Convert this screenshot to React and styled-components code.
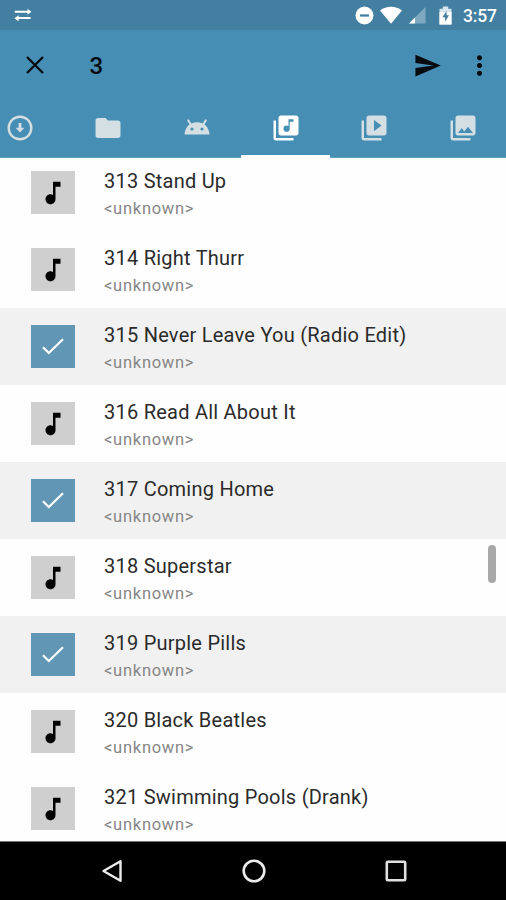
import React from 'react';
import styled, { createGlobalStyle } from 'styled-components';
import {
  MdFolder,
  MdLibraryMusic,
  MdVideoLibrary,
  MdPhotoLibrary,
  MdMusicNote,
  MdSend,
  MdMoreVert,
} from 'react-icons/md';

const GlobalStyle = createGlobalStyle`
  * {
    box-sizing: border-box;
  }

  body {
    margin: 0;
    font-family: Roboto, sans-serif;
    background: #fff;
  }

  svg {
    display: block;
    flex: none;
  }
`;

const Screen = styled.div`
  width: 506px;
  height: 900px;
  display: flex;
  flex-direction: column;
  overflow: hidden;
  background: #fefefe;
`;

const StatusBar = styled.div`
  flex: none;
  height: 30px;
  padding: 0 9px 0 14px;
  display: flex;
  align-items: center;
  justify-content: space-between;
  background: #427fa1;
  color: #fff;
`;

const StatusIcons = styled.div`
  display: flex;
  align-items: center;
  gap: 5px;
`;

const Battery = styled.div`
  margin-left: 8px;
`;

const Clock = styled.span`
  margin-left: 6px;
  width: 34px;
  font-size: 17.5px;
  line-height: 30px;
  padding-top: 1px;
  font-weight: 500;
  letter-spacing: -0.2px;
  white-space: nowrap;
`;

const Header = styled.div`
  flex: none;
  height: 128px;
  background: #478eb4;
  border-bottom: 1px solid #5f9fc0;
`;

const ActionBar = styled.div`
  height: 70px;
  padding: 0 11px 0 26px;
  display: flex;
  align-items: center;
  color: #050b0f;
`;

const Count = styled.span`
  flex: 1;
  margin-left: 45.5px;
  font-size: 24px;
  line-height: 30px;
  padding-top: 1px;
  font-weight: 500;
`;

const MoreButton = styled.div`
  margin-left: 22px;
`;

const Tabs = styled.div`
  display: flex;
  height: 58px;
  margin-left: -24.5px;
`;

const Tab = styled.div`
  flex: none;
  width: 88.6px;
  padding-top: 1px;
  display: flex;
  align-items: center;
  justify-content: center;
  border-bottom: 3px solid ${(props) => (props.$active ? '#fff' : 'transparent')};
  color: ${(props) => (props.$active ? '#fff' : '#d4dfe4')};
`;

const List = styled.div`
  position: relative;
  flex: 1;
  min-height: 0;
  overflow: hidden;
`;

const Rows = styled.div`
  margin-top: -4px;
`;

const Row = styled.div`
  height: 77px;
  padding: 0 31px;
  display: flex;
  background: ${(props) => (props.$selected ? '#f1f1f1' : 'transparent')};
`;

const Thumb = styled.div`
  flex: none;
  width: 43.5px;
  height: 43px;
  margin: 17px 29.5px 0 0;
  display: flex;
  align-items: center;
  justify-content: center;
  background: ${(props) => (props.$selected ? '#6197b4' : '#cfcfcf')};
  color: ${(props) => (props.$selected ? '#fff' : '#000')};
`;

const TrackText = styled.div`
  padding-top: 13px;
  white-space: nowrap;
`;

const Title = styled.div`
  font-size: 20px;
  line-height: 28px;
  letter-spacing: 0.24px;
  color: #2b2b2b;
`;

const Artist = styled.div`
  font-size: 16.5px;
  line-height: 27px;
  letter-spacing: 0.73px;
  color: #868686;
`;

const ScrollThumb = styled.div`
  position: absolute;
  right: 10px;
  top: 387px;
  width: 8px;
  height: 38px;
  border-radius: 4px;
  background: #a9a9a9;
`;

const NavBar = styled.div`
  flex: none;
  height: 59px;
  padding: 0 98px 0 101px;
  display: flex;
  align-items: center;
  justify-content: space-between;
  background: #000;
  border-top: 1px solid #727272;
`;

const SwapIcon = () => (
  <svg width="18" height="14" viewBox="0 0 18 14" fill="#fff">
    <path d="M.8 2.8h12.700V.8L17.500 3.800l-4 3V4.800H.8z" />
    <path d="M16.600 9h-12V7.200L.4 10.200l4.200 3V11h12z" />
  </svg>
);

const DoNotDisturbIcon = () => (
  <svg width="19" height="19" viewBox="0 0 19 19">
    <circle cx="9.5" cy="9.5" r="9" fill="#fff" />
    <rect x="5" y="8.4" width="9" height="2.2" fill="#427fa1" />
  </svg>
);

const WifiIcon = () => (
  <svg width="24" height="18" viewBox="0 0 24 18">
    <path d="M1 4.400C7.300-.6 16.700-.6 23 4.400L12 17.800z" fill="#fff" />
  </svg>
);

const SignalIcon = () => (
  <svg width="18" height="18" viewBox="0 0 18 18">
    <path d="M17.5 1v16.5H1z" fill="#7fa9c0" />
    <path d="M7 11.5v6H1z" fill="#fff" />
  </svg>
);

const BatteryIcon = () => (
  <svg width="13" height="19" viewBox="0 0 13 19">
    <path d="M.5 2.800h3.300V.5h5.400v2.300h3.300v15.700H.5z" fill="#d6e4ec" />
    <path d="M.5 6h12v12.500H.5z" fill="#fff" />
    <path d="M7.600 5 3.400 11.200h2.700v4.600l3.900-6.500H7.600z" fill="#427fa1" />
  </svg>
);

const CloseIcon = () => (
  <svg width="18" height="18" viewBox="0 0 18 18" stroke="currentColor" strokeWidth="2.3">
    <path d="M1 1l16 16M17 1L1 17" />
  </svg>
);

const DownloadIcon = () => (
  <svg width="26" height="26" viewBox="0 0 26 26" fill="none" stroke="currentColor">
    <circle cx="13" cy="13" r="11.3" strokeWidth="2.4" />
    <path d="M13 8v6" strokeWidth="2.8" />
    <path d="M8.600 12.800h8.800L13 17.400z" fill="currentColor" stroke="none" />
  </svg>
);

const AndroidIcon = () => (
  <svg width="26" height="26" viewBox="0 0 26 26">
    <path
      d="M4.300 5.400 6.800 9.600M21.700 5.400 19.200 9.600"
      stroke="currentColor"
      strokeWidth="2"
      strokeLinecap="round"
    />
    <path d="M.5 19.500C.9 12.400 5.500 7.200 13 7.200s12.100 5.200 12.500 12.300z" fill="currentColor" />
    <circle cx="8" cy="14" r="1.600" fill="#478eb4" />
    <circle cx="18" cy="14" r="1.600" fill="#478eb4" />
  </svg>
);

const CheckIcon = () => (
  <svg width="22" height="17" viewBox="0 0 22 17" fill="none" stroke="currentColor" strokeWidth="2.2">
    <path d="M1 9.200l5.800 5.800L21 1.200" />
  </svg>
);

const BackIcon = () => (
  <svg width="22" height="24" viewBox="0 0 22 24" fill="none" stroke="#ececec" strokeWidth="2.4">
    <path d="M19.500 2.200v19.600L2.500 12z" strokeLinejoin="round" />
  </svg>
);

const HomeIcon = () => (
  <svg width="24" height="24" viewBox="0 0 24 24" fill="none" stroke="#ececec" strokeWidth="2.6">
    <circle cx="12" cy="12" r="10.3" />
  </svg>
);

const RecentsIcon = () => (
  <svg width="24" height="24" viewBox="0 0 24 24" fill="none" stroke="#e0e0e0" strokeWidth="2.6">
    <rect x="2.8" y="2.8" width="18.4" height="18.4" rx="1" />
  </svg>
);

const tracks = [
  { title: '313 Stand Up' },
  { title: '314 Right Thurr' },
  { title: '315 Never Leave You (Radio Edit)', selected: true },
  { title: '316 Read All About It' },
  { title: '317 Coming Home', selected: true },
  { title: '318 Superstar' },
  { title: '319 Purple Pills', selected: true },
  { title: '320 Black Beatles' },
  { title: '321 Swimming Pools (Drank)' },
];

const Track = ({ title, selected }) => (
  <Row $selected={selected}>
    <Thumb $selected={selected}>{selected ? <CheckIcon /> : <MdMusicNote size={30} />}</Thumb>
    <TrackText>
      <Title>{title}</Title>
      <Artist>&lt;unknown&gt;</Artist>
    </TrackText>
  </Row>
);

const App = () => {
  const selectedCount = tracks.filter((track) => track.selected).length;

  return (
    <>
      <GlobalStyle />
      <Screen>
        <StatusBar>
          <SwapIcon />
          <StatusIcons>
            <DoNotDisturbIcon />
            <WifiIcon />
            <SignalIcon />
            <Battery>
              <BatteryIcon />
            </Battery>
            <Clock>3:57</Clock>
          </StatusIcons>
        </StatusBar>
        <Header>
          <ActionBar>
            <CloseIcon />
            <Count>{selectedCount}</Count>
            <MdSend size={29} />
            <MoreButton>
              <MdMoreVert size={31} />
            </MoreButton>
          </ActionBar>
          <Tabs>
            <Tab>
              <DownloadIcon />
            </Tab>
            <Tab>
              <MdFolder size={30} />
            </Tab>
            <Tab>
              <AndroidIcon />
            </Tab>
            <Tab $active>
              <MdLibraryMusic size={30} />
            </Tab>
            <Tab>
              <MdVideoLibrary size={30} />
            </Tab>
            <Tab>
              <MdPhotoLibrary size={30} />
            </Tab>
          </Tabs>
        </Header>
        <List>
          <Rows>
            {tracks.map((track) => (
              <Track key={track.title} {...track} />
            ))}
          </Rows>
          <ScrollThumb />
        </List>
        <NavBar>
          <BackIcon />
          <HomeIcon />
          <RecentsIcon />
        </NavBar>
      </Screen>
    </>
  );
};

export default App;
